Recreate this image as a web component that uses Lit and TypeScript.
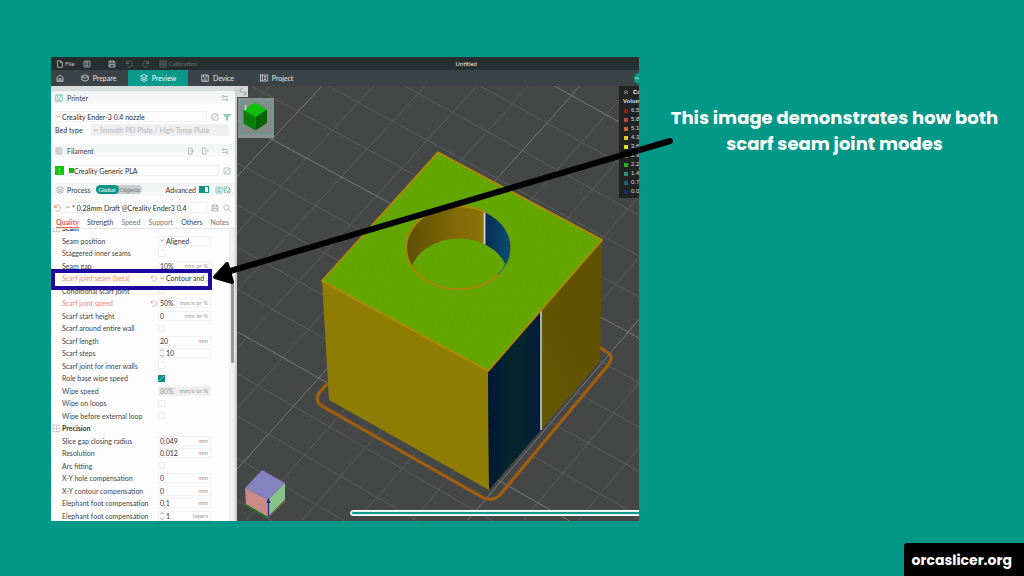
import { LitElement, html, css, svg, nothing } from "lit";
import { customElement } from "lit/decorators.js";
import { classMap } from "lit/directives/class-map.js";

type Row = {
  label: string;
  kind: "text" | "check" | "select" | "spin";
  value?: string;
  unit?: string;
  changed?: boolean;
  disabled?: boolean;
  heading?: boolean;
};

const ROWS: Row[] = [
  { label: "Seam", kind: "text", heading: true },
  { label: "Seam position", kind: "select", value: "Aligned" },
  { label: "Staggered inner seams", kind: "check" },
  { label: "Seam gap", kind: "text", value: "10%", unit: "mm or %" },
  { label: "Scarf joint seam (beta)", kind: "select", value: "Contour and ...", changed: true },
  { label: "Conditional scarf joint", kind: "check" },
  { label: "Scarf joint speed", kind: "text", value: "50%", unit: "mm/s or %", changed: true },
  { label: "Scarf start height", kind: "text", value: "0", unit: "mm or %" },
  { label: "Scarf around entire wall", kind: "check" },
  { label: "Scarf length", kind: "text", value: "20", unit: "mm" },
  { label: "Scarf steps", kind: "spin", value: "10" },
  { label: "Scarf joint for inner walls", kind: "check" },
  { label: "Role base wipe speed", kind: "check", value: "on" },
  { label: "Wipe speed", kind: "text", value: "80%", unit: "mm/s or %", disabled: true },
  { label: "Wipe on loops", kind: "check" },
  { label: "Wipe before external loop", kind: "check" },
  { label: "Precision", kind: "text", heading: true },
  { label: "Slice gap closing radius", kind: "text", value: "0.049", unit: "mm" },
  { label: "Resolution", kind: "text", value: "0.012", unit: "mm" },
  { label: "Arc fitting", kind: "check" },
  { label: "X-Y hole compensation", kind: "text", value: "0", unit: "mm" },
  { label: "X-Y contour compensation", kind: "text", value: "0", unit: "mm" },
  { label: "Elephant foot compensation", kind: "text", value: "0.1", unit: "mm" },
  { label: "Elephant foot compensation", kind: "spin", value: "1", unit: "layers" },
];

const LEGEND: [string, string][] = [
  ["#8e1f1f", "6.5"], ["#b8483c", "5.8"], ["#c8683a", "5.1"], ["#e0c82c", "4.3"], ["#e6de30", "3.6"],
  ["#7a8a20", "2.9"], ["#1fb81f", "2.2"], ["#2a8f7c", "1.4"], ["#1f6484", "0.7"], ["#1c2f6c", "0.0"],
];

const ICONS = {
  file: svg`<path d="M3 1.5h6l4 4v9H3z M9 1.5v4h4"/>`,
  list: svg`<rect x="2" y="2" width="12" height="12" rx="1"/><path d="M5 5h6M5 8h6M5 11h6"/>`,
  save: svg`<path d="M2 2h10l2 2v10H2z M5 2v4h6V2 M4 14V9h8v5"/>`,
  undo: svg`<path d="M3 2v5h5 M3 7a6 6 0 1 1 2 6"/>`,
  redo: svg`<path d="M13 2v5H8 M13 7a6 6 0 1 0-2 6"/>`,
  grid: svg`<rect x="2" y="2" width="12" height="12"/><path d="M2 8h12M8 2v12"/>`,
  home: svg`<path d="M2 7l6-5 6 5v7.5H2z M6 14.500v-5h4v5"/>`,
  cube: svg`<path d="M8 1.500l6.500 3v7L8 14.500l-6.500-3v-7z M1.500 4.500L8 8l6.500-3.500"/>`,
  layers: svg`<path d="M8 1l7 3.500L8 8 1 4.500z M1 8l7 3.500L15 8 M1 11.500L8 15l7-3.500"/>`,
  device: svg`<path d="M5 2H1.500v12.500h13V2H11"/><path d="M5 2h6v4L8 9 5 6z M4 12h8"/>`,
  project: svg`<rect x="1" y="2" width="14" height="12"/><path d="M5 2v12M8 5h4M8 8h4M8 11h4"/>`,
  sliders: svg`<path d="M6 5h8M2 11h8"/><circle cx="4" cy="5" r="2"/><circle cx="12" cy="11" r="2"/>`,
  edit: svg`<rect x="2" y="2" width="12" height="12" rx="1"/><path d="M4 12L13 3"/>`,
  wifi: svg`<path d="M1 3h14l-4 5H5z" fill="currentColor" fill-opacity=".5"/><path d="M8 8v7" stroke-width="3"/>`,
  spool: svg`<rect x="2" y="2" width="12" height="12" rx="2"/><path d="M6 2v12M10 2v12M2 8h4"/>`,
  add: svg`<path d="M10 5V2H3v12h7v-3 M7 8h7M11 5v6"/>`,
  remove: svg`<path d="M10 5V2H3v12h7v-3 M8 8h7"/>`,
  search: svg`<circle cx="7" cy="7" r="5.500"/><path d="M11 11l4 4"/>`,
  compare: svg`<path d="M2 2h5v4H2zM9 10h5v4H9z M10 3h3v5M11 6l2 2 2-2M6 13H3V8M1 10l2-2 2 2"/>`,
  collapse: svg`<path d="M6 1L2 5l4 4 M10 7l4 4-4 4"/>`,
  up: svg`<path d="M3 8l5-4 5 4M3 13l5-4 5 4"/>`,
  wave: svg`<path d="M2 7q3-4 6 0t7 1" stroke-width="2"/>`,
};

const icon = (name: keyof typeof ICONS, cls = "") =>
  html`<svg class="icon ${cls}" viewBox="0 0 16 16" aria-hidden="true">${ICONS[name]}</svg>`;

const base = css`
  * { box-sizing: border-box; }
  button, input, select {
    font: inherit; color: inherit; border: 0; margin: 0; padding: 0;
    background: none; appearance: none; border-radius: 0; min-width: 0;
  }
  button { display: inline-flex; align-items: center; }
  .icon { width: 8px; height: 8px; flex: none; fill: none; stroke: currentColor; stroke-width: 1.5; display: block; }
`;

@customElement("settings-panel")
class SettingsPanel extends LitElement {
  static styles = [base, css`
    :host {
      display: grid; min-height: 0; overflow: hidden; background: #fdfdfd; color: #444;
      grid-template-rows: 13px 6px 13px 14px 7px 13px 7px 13px 6px 13px 5px 13px 2px 13px minmax(0, 1fr);
      border-top: 5px solid #d9dcdc; border-right: 2px solid #cfcfcf;
      font: 7px/8px Lato, sans-serif;
    }
    .bar, .line { display: flex; align-items: center; gap: 4px; min-width: 0; }
    .bar { background: linear-gradient(#f3f4f4, #f8f8f8); padding: 0 6px 0 4px; color: #3c3c3c; }
    .bar .icon, .line .icon { color: #a3a9a9; }
    .bar .teal, .line .teal { color: #5db5aa; }
    .line .red { color: #e8806e; }
    .grow { flex: 1; }
    .line { padding: 0 4px; }
    .tight { padding-left: 2px; }
    .box { border: 1px solid #f0f0f0; flex: 1; height: 11px; display: flex; align-items: center; gap: 2px; min-width: 0; }
    .box select { flex: 1; }
    .chev { width: 4px; height: 3px; flex: none; fill: none; stroke: #aaa; stroke-width: 1; }
    .spin { width: 4px; height: 8px; flex: none; fill: none; stroke: #aaa; stroke-width: 1; }
    .bed { color: #b4b4b4; background: #efefef; padding-left: 2px; height: 12px; margin: 0 2px 0 4px; }
    .swatch { background: #10c510; color: #6be06b; width: 9px; height: 9px; justify-content: center; }
    .fila { gap: 0; }
    .dot { width: 5px; height: 5px; background: #10b910; flex: none; }
    .dark { color: #2c2c2c; }
    .pills { display: flex; background: #c9cccc; border-radius: 5px; height: 9px; align-items: center; font-size: 6px; color: #777; margin-left: 2px; }
    .pills button { height: 9px; padding: 0 2px 0 1px; border-radius: 5px; }
    .pills .on { background: #0a9284; color: #fff; padding: 0 3px; }
    .switch { width: 10px; height: 7px; border: 1px solid #0a9284; background: linear-gradient(90deg, #0a9284 60%, #fff 60%); }
    .process { gap: 3px; padding: 0 4px 0 5px; }
    .pair { display: flex; margin-left: 3px; }
    .filtools { display: flex; gap: 6px; margin-right: 8px; }
    .tabs { display: flex; justify-content: space-between; align-items: center; padding: 0 6px 0 5px; color: #777; border-bottom: 1px solid #e6e6e6; }
    .tabs .on { color: #e8633d; font-weight: 700; text-decoration: underline; text-underline-offset: 2px; }
    .tabs .strong { color: #444; }
    .scroller { display: flex; min-height: 0; overflow: hidden; }
    .list { flex: 1; display: flex; flex-direction: column; margin: -7px 0 -1px; padding-left: 11px; min-width: 0; }
    .row { flex: 1; display: grid; grid-template-columns: minmax(0, 1fr) 8px 53px; align-items: center; margin-right: 18px; min-height: 0; }
    .row label { white-space: nowrap; }
    .row .icon { width: 7px; height: 7px; }
    .changed label, .changed .icon { color: #ef8a72; }
    .heading { margin-left: -10px; display: flex; gap: 1px; font-weight: 700; color: #333; }
    .heading .icon { color: #aaa; width: 9px; height: 9px; stroke-width: 1; }
    .field { display: flex; align-items: center; border: 1px solid #f1f1f1; height: 10px; padding: 0 1px; gap: 2px; color: #333; }
    .field input { flex: 1; width: 0; height: 8px; }
    .field select { flex: 1; height: 8px; white-space: nowrap; }
    .unit { color: #999; font-size: 6px; padding-right: 1px; }
    .off { background: #ededed; color: #999; }
    .tick { width: 7px; height: 7px; border: 1px solid #ececec; }
    .tick:checked {
      border-color: #0a8f82; background: linear-gradient(135deg, #0a8f82 45%, #7cc9c1 45% 55%, #0a8f82 55%);
    }
    .track { width: 6px; background: #efefef; padding: 52px 0 0 1px; }
    .thumb { height: 82px; background: #969696; border-radius: 2px; width: 3px; margin-left: 1px; }
  `];

  chevron() {
    return html`<svg class="chev" viewBox="0 0 4 3" aria-hidden="true"><path d="M0 .5l2 1.500 2-1.500"/></svg>`;
  }

  control(r: Row, i: number) {
    const id = `opt-${i}`;
    if (r.kind === "check") return html`<input class="tick" type="checkbox" id=${id} .checked=${r.value === "on"} />`;
    if (r.kind === "select")
      return html`<span class="field">${this.chevron()}<select id=${id}><option>${r.value}</option></select></span>`;
    return html`<span class=${classMap({ field: true, off: !!r.disabled })}>
      ${r.kind === "spin" ? html`<svg class="spin" viewBox="0 0 4 8" aria-hidden="true"><path d="M0 2l2-1.500L4 2M0 6l2 1.500L4 6"/></svg>` : nothing}
      <input id=${id} type="text" .value=${r.value ?? ""} ?disabled=${r.disabled} />
      ${r.unit ? html`<span class="unit">${r.unit}</span>` : nothing}</span>`;
  }

  render() {
    return html`
      <div class="bar">${icon("device", "teal")}<span>Printer</span><span class="grow"></span>${icon("sliders")}</div>
      <i></i>
      <div class="line"><span class="box dark">${this.chevron()}<select aria-label="Printer preset"><option>Creality Ender-3 0.4 nozzle</option></select></span>${icon("edit")}${icon("wifi", "teal")}</div>
      <div class="line dark"><label for="bed">Bed type</label><span class="box bed">${this.chevron()}<select id="bed"><option>Smooth PEI Plate / High Temp Plate</option></select></span></div>
      <i></i>
      <div class="bar">${icon("spool")}<span>Filament</span><span class="grow"></span><span class="filtools">${icon("add")}${icon("remove")}</span>${icon("sliders")}</div>
      <i></i>
      <div class="line"><button class="swatch">1</button><span class="box fila dark"><span class="dot"></span><select aria-label="Filament"><option>Creality Generic PLA</option></select></span>${icon("edit")}</div>
      <i></i>
      <div class="bar process">${icon("layers")}<span>Process</span><span class="pills"><button class="on">Global</button><button>Objects</button></span><span class="grow"></span><label for="adv">Advanced</label><input id="adv" class="switch" type="checkbox" checked /><span class="pair">${icon("list", "teal")}${icon("compare", "teal")}</span></div>
      <i></i>
      <div class="line tight">${icon("undo", "red")}<span class="box dark">${this.chevron()}<select aria-label="Process preset"><option>* 0.28mm Draft @Creality Ender3 0.4</option></select></span>${icon("save")}${icon("search")}</div>
      <i></i>
      <nav class="tabs"><button class="on">Quality</button><button class="strong">Strength</button><button>Speed</button><button>Support</button><button class="strong">Others</button><button>Notes</button></nav>
      <div class="scroller">
        <div class="list">
          ${ROWS.map((r, i) => r.heading
            ? html`<div class="row heading">${icon("grid")}<span>${r.label}</span></div>`
            : html`<div class=${classMap({ row: true, changed: !!r.changed })}>
                <label for="opt-${i}">${r.label}</label>
                <span>${r.changed ? icon("undo") : nothing}</span>
                ${this.control(r, i)}
              </div>`)}
        </div>
        <div class="track"><div class="thumb"></div></div>
      </div>`;
  }
}

@customElement("model-view")
class ModelView extends LitElement {
  static styles = [base, css`
    :host { display: block; position: relative; overflow: hidden; min-height: 0; background: #454646; font: 6px/9px "Liberation Sans", sans-serif; color: #ddd; }
    .scene { width: 100%; height: 100%; display: block; }
    .toggle { position: absolute; left: 0; top: 0; width: 11px; height: 11px; background: #d5d5d5; color: #555; justify-content: center; }
    .legend { position: absolute; right: 0; top: 0; width: 20px; height: 112px; background: #222423; padding: 1px 0 0 4px; overflow: hidden; white-space: nowrap; font-weight: 600; }
    .legend .top { display: flex; gap: 4px; height: 10px; align-items: center; color: #fff; }
    .legend .icon { width: 6px; height: 6px; }
    .legend ul { list-style: none; margin: 0; padding: 0 0 0 1px; font-weight: 400; }
    .legend li { display: flex; align-items: center; gap: 3px; height: 9px; }
    .chip { width: 4px; height: 4px; flex: none; }
    .slider { position: absolute; left: 113px; right: -4px; bottom: 5px; height: 6px; background: #0b9a8b; border: 1px solid #fff; border-radius: 3px; box-shadow: inset 0 0 0 1px #dff2f0; }
    .slider::-webkit-slider-thumb { appearance: none; width: 1px; height: 1px; }
  `];

  render() {
    const slants = Array.from({ length: 17 }, (_, n) => n - 2);
    const falls = Array.from({ length: 18 }, (_, n) => n - 8);
    return html`
      <svg class="scene" viewBox="237 86 402 435" preserveAspectRatio="xMinYMin slice" role="img" aria-label="Sliced cube with a round hole">
        <defs>
          <pattern id="hatch" width="3" height="3" patternUnits="userSpaceOnUse" patternTransform="rotate(-28)">
            <rect width="3" height="3" fill="#66a802"/><rect width="3" height="1" fill="#60a201"/>
          </pattern>
          <linearGradient id="wall"><stop offset="0" stop-color="#5d4e05"/><stop offset=".5" stop-color="#846b06"/><stop offset="1" stop-color="#967908"/></linearGradient>
          <linearGradient id="blue"><stop offset="0" stop-color="#052b55"/><stop offset="1" stop-color="#0b5470"/></linearGradient>
          <linearGradient id="navy"><stop offset="0" stop-color="#021735"/><stop offset=".35" stop-color="#06232e"/><stop offset=".7" stop-color="#06232e"/><stop offset="1" stop-color="#021a3c"/></linearGradient>
          <linearGradient id="side" x1="0" x2="1" y1="1" y2="0"><stop offset="0" stop-color="#6a5a02"/><stop offset="1" stop-color="#5d5000"/></linearGradient>
          <clipPath id="hole"><ellipse cx="459" cy="248" rx="52" ry="41"/></clipPath>
        </defs>
        ${slants.map((k) => svg`<line x1=${322 + 51.6 * k} y1="86" x2=${-85 + 55.3 * k} y2="520" stroke=${k % 5 ? "#626363" : "#868787"} stroke-width=".8"/>`)}
        ${falls.map((m) => svg`<line x1="238" y1=${121 + 42.2 * m} x2="639" y2=${338 + (m < 0 ? 41 : 44.5) * m} stroke=${m % 5 ? "#626363" : "#868787"} stroke-width=".8"/>`)}
        <path d="M327 384l-8 9q-5 8 3 13L480 496q11 7 20-1L609 364q5-8-2-12l-8-5" fill="none" stroke="#935910" stroke-width="3.600"/>
        <path d="M327 384l-8 9q-5 8 3 13L480 496q11 7 20-1L609 364q5-8-2-12l-8-5" fill="none" stroke="#a86a1c" stroke-width="1"/>
        <path d="M322 281L488 371L489 490L329 400z" fill="#8f7c05"/>
        <path d="M488 371L602 240L600 361L489 490z" fill="url(#side)"/>
        <path d="M488 371L541 310V430L489 490z" fill="url(#navy)"/>
        <path d="M541 310V430" stroke="#c6cdd0" stroke-width="1.600"/>
        <path d="M438 152.500L602 240L488 371L322 281z" fill="url(#hatch)" stroke="#a98a08" stroke-width="2" stroke-linejoin="round"/>
        <g clip-path="url(#hole)">
          <rect x="406" y="205" width="106" height="86" fill="url(#wall)"/>
          <rect x="485" y="205" width="28" height="75" fill="url(#blue)"/>
          <ellipse cx="459" cy="278" rx="49.500" ry="39.500" fill="url(#hatch)"/>
          <path d="M498 275q6-5 8-12" stroke="#117a58" stroke-width="2" fill="none"/>
          <path d="M484.500 208V244" stroke="#d4d6cf" stroke-width="1.800"/>
        </g>
        <path d="M498 275A52.500 41.500 0 1 1 485 212" fill="none" stroke="#a9850b" stroke-width="2"/>
        <path d="M485 212A52.500 41.500 0 0 1 498 275" fill="none" stroke="#7a8a18" stroke-width="1"/>
        <rect x="238" y="98" width="36" height="40" fill="#8b8f8e"/>
        <rect x="240" y="101" width="32" height="33" fill="#868a89" stroke="#5f9d9d" stroke-width="1"/>
        <path d="M255 102.500l12 7-11.500 7.500-12-7z" fill="#0cc00c"/>
        <path d="M243.500 110l12 7v13.500l-12-7z" fill="#087f08"/>
        <path d="M267 109.500v13.500l-11.500 7.500V117z" fill="#066406"/>
        <path d="M245.500 105v5" stroke="#cfe5cf" stroke-width="1.500"/>
        <path d="M262 470l23 13-17 17-23-12z" fill="#8483bf"/>
        <path d="M245 488l23 12v18l-22-13z" fill="#c98b84"/>
        <path d="M285 483v18l-17 17v-18z" fill="#86c389"/>
        <path d="M246 505l22 13" stroke="#0a7a18" stroke-width="1.500"/>
        <path d="M268 517l17-17" stroke="#94312b" stroke-width="1"/>
        <path d="M268.500 517v-18" stroke="#22228a" stroke-width="1.200"/><path d="M266.500 503l2-5 2 5z" fill="#22228a"/>
      </svg>
      <button class="toggle" aria-label="Collapse sidebar">${icon("collapse")}</button>
      <div class="legend">
        <div class="top">${icon("up")}<span>Color</span></div>
        <div>Volumetric</div>
        <ul>${LEGEND.map(([c, t]) => html`<li><span class="chip" style="background:${c}"></span>${t}</li>`)}</ul>
      </div>
      <input class="slider" type="range" aria-label="Move" />`;
  }
}

@customElement("app-root")
class AppRoot extends LitElement {
  static styles = [base, css`
    :host { display: block; }
    .page {
      position: relative; height: 100vh; background: #029887; display: grid; overflow: hidden;
      grid-template-columns: minmax(0, 588fr) minmax(0, 385fr); padding: 57px 0 55px 51px;
    }
    .app { position: relative; display: grid; grid-template-rows: 13px 16px minmax(0, 1fr); min-height: 0; font: 7px/8px Lato, sans-serif; color: #e8eaea; }
    .title { display: grid; grid-template-columns: minmax(0, 402fr) auto minmax(0, 158fr); align-items: center; background: #262f30; padding: 0 5px; font-size: 6px; }
    .tools { display: flex; align-items: center; gap: 9px; color: #c6caca; }
    .tools button { gap: 1px; }
    .tools .apart { margin-left: 8px; }
    .tools .dim { color: #6c7475; }
    .modes { display: flex; background: #3a4345; overflow: hidden; position: relative; }
    .modes button { width: 59px; justify-content: center; gap: 4px; }
    .modes .home { width: 18px; }
    .modes .on { background: #0a9a8b; color: #fff; width: 60px; }
    .modes .slice { position: absolute; right: -6px; top: 3px; width: 11px; height: 11px; border-radius: 50%; background: #0a9a8b; justify-content: flex-start; }
    .body { display: grid; grid-template-columns: 186px minmax(0, 1fr); min-height: 0; }
    .note { position: absolute; left: 0; top: 0; width: 630px; height: 240px; overflow: visible; pointer-events: none; }
    .caption { margin: 0; padding: 48px 0 0 6px; text-align: center; color: #fff; font: 700 18px/26px Poppins, Inter, sans-serif; }
    .caption span { display: block; }
    .site { position: absolute; right: 0; bottom: 0; background: #000; color: #fff; padding: 4px 12px 3px 8px; border-radius: 3px 0 0 0; font: 700 14px/26px Poppins, Inter, sans-serif; text-decoration: none; }
  `];

  render() {
    return html`
      <main class="page">
        <section class="app">
          <header class="title">
            <div class="tools">
              <button>${icon("file")}File</button>
              <button aria-label="Presets">${icon("list")}</button>
              <button class="apart" aria-label="Save">${icon("save")}</button>
              <button class="dim" aria-label="Undo">${icon("undo")}</button>
              <button class="dim" aria-label="Redo">${icon("redo")}</button>
              <button class="dim">${icon("grid")}Calibration</button>
            </div>
            <span>Untitled</span>
          </header>
          <nav class="modes">
            <button class="home" aria-label="Home">${icon("home")}</button>
            <button>${icon("cube")}Prepare</button>
            <button class="on">${icon("layers")}Preview</button>
            <button>${icon("device")}Device</button>
            <button>${icon("project")}Project</button>
            <button class="slice" aria-label="Slice">${icon("wave")}</button>
          </nav>
          <div class="body">
            <settings-panel></settings-panel>
            <model-view></model-view>
          </div>
          <svg class="note" viewBox="51 57 630 240" aria-hidden="true">
            <rect x="53" y="271" width="157" height="17" fill="none" stroke="#1c07a0" stroke-width="4"/>
            <path d="M227 272L670 141" stroke="#000" stroke-width="6" stroke-linecap="round"/>
            <path d="M215 277L227 264L232 282z" fill="#000" stroke="#000" stroke-width="4" stroke-linejoin="round"/>
          </svg>
        </section>
        <h1 class="caption"><span>This image demonstrates how both</span><span>scarf seam joint modes</span></h1>
        <a class="site" href="https://orcaslicer.org">orcaslicer.org</a>
      </main>`;
  }
}
